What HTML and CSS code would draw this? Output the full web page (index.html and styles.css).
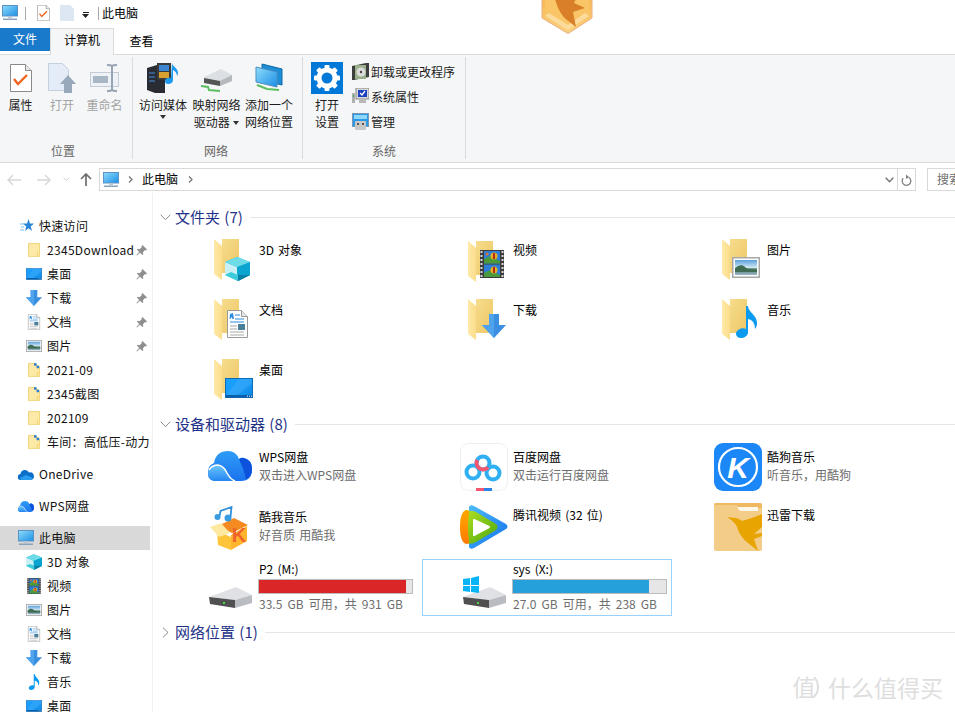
FILE: index.html
```html
<!DOCTYPE html>
<html lang="zh-CN">
<head>
<meta charset="utf-8">
<title>此电脑</title>
<link rel="stylesheet" href="styles.css">
</head>
<body>
<svg class="defs" aria-hidden="true">
  <defs>
    <linearGradient id="g-fback" x1="0" y1="0" x2="1" y2="1"><stop offset="0" stop-color="#f6dc8c"/><stop offset="1" stop-color="#eec766"/></linearGradient>
    <linearGradient id="g-fleaf" x1="0" y1="0" x2="1" y2="0"><stop offset="0" stop-color="#ffeaa8"/><stop offset="1" stop-color="#fbdc8a"/></linearGradient>
    <linearGradient id="g-screen" x1="0" y1="0" x2="1" y2="1"><stop offset="0" stop-color="#8fdcfa"/><stop offset="1" stop-color="#1b8fe6"/></linearGradient>
    <linearGradient id="g-desk" x1="0" y1="0" x2="1" y2="1"><stop offset="0" stop-color="#18a0ff"/><stop offset=".55" stop-color="#1b9cf8"/><stop offset="1" stop-color="#0d83e0"/></linearGradient>
    <linearGradient id="g-sea" x1="0" y1="0" x2="0" y2="1"><stop offset="0" stop-color="#5aa0dc"/><stop offset=".5" stop-color="#cfe7f2"/><stop offset=".6" stop-color="#4a7a5a"/><stop offset="1" stop-color="#9db8d2"/></linearGradient>
    <linearGradient id="g-cloud" x1="0" y1="0" x2="0" y2="1"><stop offset="0" stop-color="#2f9df6"/><stop offset="1" stop-color="#1b72ee"/></linearGradient>
    <linearGradient id="g-cloud2" x1="0" y1="0" x2="0" y2="1"><stop offset="0" stop-color="#6cc8fb"/><stop offset="1" stop-color="#2486f2"/></linearGradient>
    <linearGradient id="g-hex" x1="0" y1="0" x2="0" y2="1"><stop offset="0" stop-color="#f7b64e"/><stop offset="1" stop-color="#fbd27e"/></linearGradient>
    <linearGradient id="g-tv" x1="0" y1="0" x2="1" y2="1"><stop offset="0" stop-color="#4dbcf8"/><stop offset="1" stop-color="#1270ec"/></linearGradient>
    <linearGradient id="g-tvg" x1="0" y1="0" x2="1" y2="1"><stop offset="0" stop-color="#b4e020"/><stop offset="1" stop-color="#4aa80c"/></linearGradient>
    <linearGradient id="g-tvo" x1="0" y1="0" x2="0" y2="1"><stop offset="0" stop-color="#ffa800"/><stop offset="1" stop-color="#ff7a00"/></linearGradient>

    <symbol id="folder" viewBox="0 0 25 41"><path d="M8 0h17v34H8z" fill="url(#g-fback)"/><path d="M0 0l8 7v34l-8-6z" fill="url(#g-fleaf)"/><path d="M8 34h14v3H8z" fill="#fff" opacity=".5"/></symbol>
    <symbol id="fsm" viewBox="0 0 14 16"><path d="M.5.5h13v15H.5z" fill="#fdeaa6" stroke="#f0cf6a"/><path d="M11 10v5" stroke="#f0cf6a"/></symbol>
    <symbol id="fsmp" viewBox="0 0 14 16"><path d="M.5.5h8l5 4v11H.5z" fill="#fdeaa6" stroke="#f0cf6a"/><path d="M11 10v5" stroke="#f0cf6a"/><path d="M7 0h3v3H7zM10 3h3v3h-3z" fill="#2d7fd0"/></symbol>
    <symbol id="arrow" viewBox="0 0 24 24"><path d="M7 0h10v11h7L12 24 0 11h7z" fill="#3a8fe0"/><path d="M7 0h5v24L0 11h7z" fill="#4fa3ec"/></symbol>
    <symbol id="doc" viewBox="0 0 21 28"><path d="M.5.5h14l6 6v21H.5z" fill="#fff" stroke="#9a9a9a"/><path d="M14.500 .5v6h6" fill="#e6e6e6" stroke="#9a9a9a"/><path d="M3 4l3-1 1 6H5.500L5 7.500H4L3.500 9H2.500z" fill="#2b8ce0"/><path d="M8 5h5M8 9h9M3 12h14" stroke="#2b8ce0"/><path d="M3 16h7M3 19h7M3 22h14M3 25h14" stroke="#a8a8a8"/><rect x="11" y="14" width="7" height="6" fill="#4a7f98"/></symbol>
    <symbol id="pic" viewBox="0 0 28 21"><rect x=".75" y=".75" width="26.500" height="19.500" fill="#fff" stroke="#a8a8a8" stroke-width="1.500"/><rect x="3" y="3" width="22" height="15" fill="url(#g-sea)"/><path d="M3 11c4-3 7-4 10-1s6 2 12 3v2H3z" fill="#3f6c52"/></symbol>
    <symbol id="cube" viewBox="0 0 25 24"><path d="M12 0l13 5v13l-12 6L0 18V5z" fill="#17b6d8"/><path d="M0 5l12 5v14L0 18z" fill="#c9f0f5"/><path d="M12 10l13-5v13l-12 6z" fill="#09a4cf"/><path d="M0 5l12-5 13 5-13 5z" fill="#6edbe8"/><path d="M0 18l6-3 7 3v6z" fill="#3dcbdc"/><path d="M13 18l12 0-12 6z" fill="#0a7fa5"/></symbol>
    <symbol id="film" viewBox="0 0 24 28"><rect width="24" height="28" fill="#3c3c3c"/><path d="M1.500 1v26M22.500 1v26" stroke="#d8d8d8" stroke-width="2" stroke-dasharray="2 2"/><rect x="4" y="1" width="16" height="12.500" fill="#2c7ed8"/><rect x="4" y="14.500" width="16" height="12.500" fill="#2c7ed8"/><path d="M4 9l6-3 10 5v2.500H4zM4 23l6-3 10 5v2H4z" fill="#4a9a3c"/><circle cx="14" cy="6" r="3.500" fill="#e8b020"/><path d="M14 3v6" stroke="#b02a20" stroke-width="2"/><circle cx="14" cy="20" r="3.500" fill="#e8b020"/><path d="M14 17v6" stroke="#b02a20" stroke-width="2"/><circle cx="7" cy="4" r="1.500" fill="#e07030"/></symbol>
    <symbol id="note" viewBox="0 0 21 32"><path d="M10 0h2c0 6 9 9 9 17 0 3-1 5-2 6 0-5-2-9-7-10v13c0 4-4 6-7 6s-5-2-5-4c0-4 6-7 10-5z" fill="#0a9af0"/></symbol>
    <symbol id="desk" viewBox="0 0 28 20"><rect x=".5" y=".5" width="27" height="19" fill="url(#g-desk)" stroke="#0e6bb8"/><path d="M1 19l12-18h14v4L10 19z" fill="#fff" opacity=".08"/><rect x="1" y="17" width="26" height="2.500" fill="#0b5fa8"/><path d="M22 18.200h5" stroke="#fff" stroke-dasharray="1 1"/></symbol>
    <symbol id="pc" viewBox="0 0 16 16"><rect x=".5" y=".5" width="15" height="10.500" fill="url(#g-screen)" stroke="#5b94c4"/><rect x="6" y="11" width="4" height="2" fill="#b9c6d2"/><rect x="1" y="13.500" width="14" height="1.500" fill="#8aa2ba"/></symbol>
    <symbol id="pin" viewBox="0 0 12 12"><path d="M7 0l5 5-1 1-1-.5L7.500 8 8 10 7 11 4.500 8.500 1 11.500.5 11l3-3.500L1 5l1-1 2 .5L6.500 2 6 1z" fill="#8e8e8e"/></symbol>
    <symbol id="star" viewBox="0 0 14 14"><path d="M8.500 0l1.500 4.500h4L10.700 7.500 12 12 8.500 9.300 5 12l1.300-4.500L3 4.500h4z" fill="#2a86d8"/><path d="M0 5h4M1 8h3M0 11h4" stroke="#7dbdf0"/></symbol>
    <symbol id="check" viewBox="0 0 22 28"><path d="M.5.5h15l6 6v21H.5z" fill="#fff" stroke="#8a8a8a"/><path d="M15.500 .5v6h6" fill="#e8e8e8" stroke="#8a8a8a"/><path d="M4 15l4 5 9-9" fill="none" stroke="#f0641e" stroke-width="2.400"/></symbol>
    <symbol id="odrive" viewBox="0 0 16 11"><path d="M3 11a3 3 0 0 1-.5-6A4.500 4.500 0 0 1 11 3.500 3.700 3.700 0 0 1 13 11z" fill="#0a6fc8"/><path d="M2 9l6-3 7 3-2 2H3z" fill="#2a9cf0"/></symbol>
    <symbol id="wps" viewBox="0 0 44 30"><path d="M8 30Q0 30 0 22 0 14 6 12 8 0 20 0 28 0 31 8 34 6 36 7 44 9 44 18 44 30 33 30z" fill="url(#g-cloud)"/><path d="M31 8Q36 18 38 28 44 26 44 18 44 9 36 7 34 6 31 8z" fill="#0d52dc"/><path d="M0 22Q3 14 10 14 16 15 19 22 22 28 27 30H8Q0 30 0 22z" fill="url(#g-cloud2)"/><path d="M1 19Q4 14 10 14 16 15 19 22 22 28 27 30" fill="none" stroke="#fff" stroke-width="1.600"/></symbol>
    <symbol id="hdd" viewBox="0 0 43 23"><path d="M0 11L27 1l16 8-17 5z" fill="#dfe1e5"/><path d="M0 11l26 3v8L1 18z" fill="#505050"/><path d="M26 14l17-5v8l-17 5z" fill="#b9bcc0"/><rect x="14" y="16" width="2" height="2" fill="#45d845"/></symbol>
  </defs>
</svg>

<div class="window">
  <header class="titlebar">
    <svg class="t-pc" width="16" height="16"><use href="#pc"/></svg>
    <span class="t-sep"></span>
    <svg class="t-check" width="13" height="16"><use href="#check"/></svg>
    <svg class="t-blank" width="14" height="16" viewBox="0 0 14 16"><path d="M0 0h10l4 4v12H0z" fill="#dde6f3"/></svg>
    <svg class="t-caret" width="8" height="6" viewBox="0 0 8 6"><path d="M1 0h6v1H1zM0 2h7L3.500 6z" fill="#222"/></svg>
    <span class="t-sep t-sep2"></span>
    <span class="t-title">此电脑</span>
  </header>

  <nav class="tabs">
    <span class="tab tab-file">文件</span>
    <span class="tab tab-active">计算机</span>
    <span class="tab tab-view">查看</span>
  </nav>

  <section class="ribbon">
    <div class="group group-loc">
      <div class="buttons">
        <div class="rbtn rbtn-a"><svg width="22" height="28"><use href="#check"/></svg><span>属性</span></div>
        <div class="rbtn rbtn-b off"><svg width="28" height="30" viewBox="0 0 28 30"><path d="M.5.5h14l6 6v21H.5z" fill="#e4ecf7" stroke="#c4d0e0"/><path d="M20 12l8 9h-4v9h-8v-9h-4z" fill="#98a9bb"/></svg><span>打开</span></div>
        <div class="rbtn rbtn-c off"><svg width="30" height="30" viewBox="0 0 30 30"><rect x=".5" y="9.500" width="28" height="14" fill="#eef2f7" stroke="#c2ccd8"/><rect x="3" y="13" width="15" height="7" fill="#a8b6c6"/><path d="M17 2c3 0 5 0 5 2 0-2 2-2 5-2M22 4v22M17 28c3 0 5 0 5-2 0 2 2 2 5 2" fill="none" stroke="#96a4b4" stroke-width="2"/></svg><span>重命名</span></div>
      </div>
      <div class="glabel">位置</div>
    </div>
    <div class="group group-net">
      <div class="buttons">
        <div class="rbtn rbtn-d">
          <svg width="32" height="30" viewBox="0 0 32 30"><path d="M0 5l10-3 8 3v25H8l-8-3z" fill="#2a2c33"/><path d="M2 10h6M2 14h6M2 18h6" stroke="#3f8fe0"/><rect x="10" y="0" width="14" height="17" fill="#3a3a3a"/><rect x="12" y="2" width="10" height="6" fill="#3a84d0"/><rect x="12" y="9" width="10" height="6" fill="#d8a030"/><path d="M25 0c0 3 6 5 6 10 0 2-1 3-1 3 0-3-2-5-4-6v10c0 3-3 4-5 4s-3-1-3-3c0-3 4-4 6-3z" fill="#1d9af0"/></svg>
          <span>访问媒体</span><i class="caret"></i>
        </div>
        <div class="rbtn rbtn-e">
          <svg width="32" height="30" viewBox="0 0 32 30"><path d="M3 14L20 6l11 6v6l-12 5L3 20z" fill="#dcdfe3"/><path d="M3 15l16 3v5L3 20z" fill="#555"/><path d="M19 18l12-6v6l-12 5z" fill="#b5b8bc"/><path d="M0 23l7 1 1 3 11 1" fill="none" stroke="#5cc060" stroke-width="2"/></svg>
          <span>映射网络<br>驱动器 <b class="mini"></b></span>
        </div>
        <div class="rbtn rbtn-f">
          <svg width="30" height="30" viewBox="0 0 30 30"><path d="M8 1l20 5v16L8 17z" fill="#1d8ed6" stroke="#0f6aa8"/><path d="M2 4l21 5v15L2 19z" fill="url(#g-screen)" stroke="#4d8fc0"/><path d="M3 22l10 4 12 1" fill="none" stroke="#5cc060" stroke-width="2"/></svg>
          <span>添加一个<br>网络位置</span>
        </div>
      </div>
      <div class="glabel">网络</div>
    </div>
    <div class="group group-sys">
      <div class="buttons">
        <div class="rbtn rbtn-g">
          <svg width="32" height="32" viewBox="0 0 32 32"><rect width="32" height="32" fill="#0078d7"/><g fill="#fff"><circle cx="16" cy="16" r="10.500"/><rect x="13.500" y="3" width="5" height="26" rx="1"/><rect x="13.500" y="3" width="5" height="26" rx="1" transform="rotate(45 16 16)"/><rect x="13.500" y="3" width="5" height="26" rx="1" transform="rotate(90 16 16)"/><rect x="13.500" y="3" width="5" height="26" rx="1" transform="rotate(135 16 16)"/></g><circle cx="16" cy="16" r="5.500" fill="#0078d7"/></svg>
          <span>打开<br>设置</span>
        </div>
        <div class="smallcol">
          <div class="srow"><svg width="17" height="17" viewBox="0 0 17 17"><path d="M0 3l14-3h3v14L2 17H0z" fill="#3e3e3e"/><rect x="3" y="2" width="11" height="14" fill="#9ab08c"/><circle cx="9" cy="9" r="4.500" fill="#dcdcdc"/><circle cx="9" cy="9" r="1.200" fill="#444"/></svg><span>卸载或更改程序</span></div>
          <div class="srow"><svg width="17" height="17" viewBox="0 0 17 17"><rect x="4" y="0" width="13" height="11" fill="#d8d8d8" stroke="#888"/><rect x="6" y="2" width="9" height="7" fill="#1a3fc0"/><path d="M8 5l2 2 3-4" fill="none" stroke="#fff" stroke-width="1.300"/><rect x="0" y="5" width="3" height="10" fill="#b0b0b0"/><rect x="1" y="7" width="1" height="2" fill="#3fae44"/><rect x="7" y="12" width="7" height="3" fill="#b8b8b8"/></svg><span>系统属性</span></div>
          <div class="srow"><svg width="17" height="17" viewBox="0 0 17 17"><rect x=".5" y=".5" width="16" height="13" fill="#2a9ae8" stroke="#7a98b4"/><rect x="2" y="2" width="13" height="4" fill="#8fd8fa"/><rect x="3" y="8" width="11" height="9" rx="1" fill="#c8c8c8"/><circle cx="6" cy="11" r="1" fill="#333"/><circle cx="11" cy="11" r="1" fill="#333"/></svg><span>管理</span></div>
        </div>
      </div>
      <div class="glabel">系统</div>
    </div>
  </section>

  <div class="addressrow">
    <svg class="nav nav-back" width="14" height="12" viewBox="0 0 14 12"><path d="M6 1L1 6l5 5M1 6h13" fill="none" stroke="#d8d8d8" stroke-width="1.500"/></svg>
    <svg class="nav nav-fwd" width="14" height="12" viewBox="0 0 14 12"><path d="M8 1l5 5-5 5M13 6H0" fill="none" stroke="#d8d8d8" stroke-width="1.500"/></svg>
    <svg class="nav nav-down" width="7" height="5" viewBox="0 0 7 5"><path d="M.5 .5l3 3 3-3" fill="none" stroke="#d0d0d0"/></svg>
    <svg class="nav nav-up" width="12" height="13" viewBox="0 0 12 13"><path d="M1 6l5-5 5 5M6 1v12" fill="none" stroke="#6d6d6d" stroke-width="1.700"/></svg>
    <div class="addr">
      <svg width="16" height="16"><use href="#pc"/></svg>
      <svg class="crumb" width="5" height="7" viewBox="0 0 5 7"><path d="M1 .5l3 3-3 3" fill="none" stroke="#777" stroke-width="1.300"/></svg>
      <span class="addr-text">此电脑</span>
      <svg class="crumb" width="5" height="7" viewBox="0 0 5 7"><path d="M1 .5l3 3-3 3" fill="none" stroke="#777" stroke-width="1.300"/></svg>
      <svg class="addr-drop" width="9" height="6" viewBox="0 0 9 6"><path d="M.7 .7l3.800 4 3.800-4" fill="none" stroke="#777" stroke-width="1.500"/></svg>
      <div class="addr-refresh"><svg width="11" height="12" viewBox="0 0 11 12"><path d="M7.500 3.200A4.300 4.300 0 1 1 2.200 4.200" fill="none" stroke="#808080" stroke-width="1.300"/><path d="M5 .5l3 2.500-3 2z" fill="#808080"/></svg></div>
    </div>
    <div class="search">搜索</div>
  </div>

  <div class="body">
    <aside class="sidebar">
      <div class="sgroup">
        <div class="item lv0"><svg class="ic-star" width="14" height="14"><use href="#star"/></svg><span>快速访问</span></div>
        <div class="item"><svg class="ic-f" width="12" height="16"><use href="#fsm"/></svg><span>2345Download</span><svg class="pin" width="11" height="11"><use href="#pin"/></svg></div>
        <div class="item"><svg width="16" height="12"><use href="#desk"/></svg><span>桌面</span><svg class="pin" width="11" height="11"><use href="#pin"/></svg></div>
        <div class="item"><svg width="16" height="16"><use href="#arrow"/></svg><span>下载</span><svg class="pin" width="11" height="11"><use href="#pin"/></svg></div>
        <div class="item"><svg width="16" height="16"><use href="#doc"/></svg><span>文档</span><svg class="pin" width="11" height="11"><use href="#pin"/></svg></div>
        <div class="item"><svg width="16" height="12"><use href="#pic"/></svg><span>图片</span><svg class="pin" width="11" height="11"><use href="#pin"/></svg></div>
        <div class="item"><svg class="ic-f" width="12" height="16"><use href="#fsmp"/></svg><span>2021-09</span></div>
        <div class="item"><svg class="ic-f" width="12" height="16"><use href="#fsmp"/></svg><span>2345截图</span></div>
        <div class="item"><svg class="ic-f" width="12" height="16"><use href="#fsm"/></svg><span>202109</span></div>
        <div class="item"><svg class="ic-f" width="12" height="16"><use href="#fsmp"/></svg><span>车间：高低压-动力车间设备</span></div>
      </div>
      <div class="sgroup">
        <div class="item lv0"><svg width="16" height="11"><use href="#odrive"/></svg><span>OneDrive</span></div>
      </div>
      <div class="sgroup">
        <div class="item lv0"><svg width="16" height="11"><use href="#wps"/></svg><span>WPS网盘</span></div>
      </div>
      <div class="sgroup">
        <div class="item lv0 selected"><svg width="16" height="16"><use href="#pc"/></svg><span>此电脑</span></div>
        <div class="item"><svg width="16" height="16"><use href="#cube"/></svg><span>3D 对象</span></div>
        <div class="item"><svg width="16" height="16"><use href="#film"/></svg><span>视频</span></div>
        <div class="item"><svg width="16" height="12"><use href="#pic"/></svg><span>图片</span></div>
        <div class="item"><svg width="16" height="16"><use href="#doc"/></svg><span>文档</span></div>
        <div class="item"><svg width="16" height="16"><use href="#arrow"/></svg><span>下载</span></div>
        <div class="item"><svg width="16" height="16"><use href="#note"/></svg><span>音乐</span></div>
        <div class="item"><svg width="16" height="12"><use href="#desk"/></svg><span>桌面</span></div>
      </div>
    </aside>

    <main class="content">
      <div class="sechead">
        <svg width="11" height="7" viewBox="0 0 11 7"><path d="M.7 .7l4.800 5 4.800-5" fill="none" stroke="#8a8a8a"/></svg>
        <span>文件夹 (7)</span><i></i>
      </div>
      <div class="tiles tiles-folders">
        <div class="tile"><svg class="ticon" width="52" height="48" viewBox="-2 0 52 48"><use href="#folder" x="6" y="1" width="25" height="41"/><use href="#cube" x="17" y="19" width="25" height="24"/></svg><div class="ttext"><div class="name">3D 对象</div></div></div>
        <div class="tile"><svg class="ticon" width="52" height="48" viewBox="-2 0 52 48"><use href="#folder" x="6" y="3" width="25" height="41"/><use href="#film" x="18" y="12" width="24" height="28"/></svg><div class="ttext"><div class="name">视频</div></div></div>
        <div class="tile"><svg class="ticon" width="52" height="48" viewBox="-2 0 52 48"><use href="#folder" x="6" y="1" width="25" height="41"/><use href="#pic" x="16" y="19" width="28" height="21"/></svg><div class="ttext"><div class="name">图片</div></div></div>
        <div class="tile"><svg class="ticon" width="52" height="48" viewBox="-2 0 52 48"><use href="#folder" x="6" y="1" width="25" height="41"/><use href="#doc" x="19" y="12" width="21" height="28"/></svg><div class="ttext"><div class="name">文档</div></div></div>
        <div class="tile"><svg class="ticon" width="52" height="48" viewBox="-2 0 52 48"><use href="#folder" x="6" y="1" width="25" height="41"/><use href="#arrow" x="20" y="16" width="24" height="24"/></svg><div class="ttext"><div class="name">下载</div></div></div>
        <div class="tile"><svg class="ticon" width="52" height="48" viewBox="-2 0 52 48"><use href="#folder" x="6" y="1" width="25" height="41"/><use href="#note" x="20" y="8" width="21" height="32"/></svg><div class="ttext"><div class="name">音乐</div></div></div>
        <div class="tile"><svg class="ticon" width="52" height="48" viewBox="-2 0 52 48"><use href="#folder" x="6" y="1" width="25" height="41"/><use href="#desk" x="17" y="20" width="28" height="20"/></svg><div class="ttext"><div class="name">桌面</div></div></div>
      </div>

      <div class="sechead">
        <svg width="11" height="7" viewBox="0 0 11 7"><path d="M.7 .7l4.800 5 4.800-5" fill="none" stroke="#8a8a8a"/></svg>
        <span>设备和驱动器 (8)</span><i></i>
      </div>
      <div class="tiles tiles-devices">
        <div class="tile"><svg class="ticon" width="52" height="48" viewBox="-2 0 52 48"><use href="#wps" x="0" y="8" width="44" height="30"/></svg><div class="ttext two"><div class="name">WPS网盘</div><div class="desc">双击进入WPS网盘</div></div></div>
        <div class="tile"><svg class="ticon" width="52" height="48" viewBox="-2 0 52 48"><rect x="-1.500" y=".5" width="47" height="47" rx="8" fill="#fff" stroke="#efefef"/><circle cx="11" cy="29" r="6.500" fill="none" stroke="#2fb0f2" stroke-width="4"/><circle cx="31" cy="30" r="6.500" fill="none" stroke="#2fb0f2" stroke-width="4"/><circle cx="21" cy="20" r="6.500" fill="none" stroke="#2fb0f2" stroke-width="4"/><path d="M15.300 17A6.500 6.500 0 0 0 26 24.200" fill="none" stroke="#f4566f" stroke-width="4"/><path d="M14 45h8v3h-8z" fill="#f4566f"/><path d="M22 45h8v3h-8z" fill="#2b82e8"/></svg><div class="ttext two"><div class="name">百度网盘</div><div class="desc">双击运行百度网盘</div></div></div>
        <div class="tile"><svg class="ticon" width="52" height="48" viewBox="-2 0 52 48"><rect x="-2" width="48" height="48" rx="9" fill="#1c87f7"/><circle cx="22" cy="24" r="19" fill="none" stroke="#fff" stroke-width="2.200"/><text class="logo-k" x="22" y="35" text-anchor="middle">K</text></svg><div class="ttext two"><div class="name">酷狗音乐</div><div class="desc">听音乐，用酷狗</div></div></div>
        <div class="tile"><svg class="ticon" width="52" height="48" viewBox="-2 0 52 48"><path d="M10 23l16-8 14 7-16 8z" fill="#f58a20"/><path d="M9 28l14 6v13l-13-5z" fill="#ffc53a"/><path d="M23 32l16-9v15l-16 9z" fill="#ffb52e"/><path d="M2 24l11-4 9 10-11 4z" fill="#ffe9a0"/><text class="logo-kw" x="31" y="39" text-anchor="middle">K</text><path d="M11.500 13l1-5 11-4-1 10" fill="none" stroke="#2f8fd8" stroke-width="1.800"/><circle cx="9.500" cy="14" r="3" fill="#3a9ce0"/><circle cx="20" cy="15" r="3.500" fill="#3a9ce0"/></svg><div class="ttext two"><div class="name">酷我音乐</div><div class="desc">好音质 用酷我</div></div></div>
        <div class="tile"><svg class="ticon" width="52" height="48" viewBox="-2 0 52 48"><path d="M7 4Q8 1 12 3L44 21Q47 24 44 26L12 45Q8 47 7 44z" fill="url(#g-tv)"/><path d="M2 8Q10 7 14 9L34 21Q37 24 34 27L14 39Q10 42 3 40z" fill="url(#g-tvg)"/><path d="M4 7Q-2 9-2 24-2 39 4 41 8 41 7 38 5 24 7 10 8 7 4 7z" fill="url(#g-tvo)"/><path d="M12 17L27 24 12 32z" fill="#fff" stroke="#fff" stroke-width="2" stroke-linejoin="round"/></svg><div class="ttext"><div class="name">腾讯视频 (32 位)</div></div></div>
        <div class="tile"><svg class="ticon" width="52" height="48" viewBox="-2 0 52 48"><rect x="-2" width="48" height="48" rx="2" fill="#f3cd87"/><path d="M-2 2q0-2 2-2h44q2 0 2 2v3H24l-3-3z" fill="#efb962"/><path d="M21 4h21v4H24z" fill="#fff8ea"/><path d="M11 14L20 15Q24 16 26 18 34 16 46 11V24L38 31 46 30V33L38 36 42 48 32 40Q24 34 21 24 19 19 11 14z" fill="#e8a400"/></svg><div class="ttext"><div class="name">迅雷下载</div></div></div>
        <div class="tile drive"><svg class="ticon" width="52" height="48" viewBox="-2 0 52 48"><use href="#hdd" x="1" y="23" width="43" height="23"/></svg><div class="ttext"><div class="name">P2 (M:)</div><div class="bar"><div class="fill red" style="width:96%"></div></div><div class="desc">33.5 GB 可用，共 931 GB</div></div></div>
        <div class="tile drive focus"><svg class="ticon" width="52" height="48" viewBox="-2 0 52 48"><use href="#hdd" x="1" y="23" width="43" height="23"/><path d="M1 16l7-1v7H1zM9 15l8-2v9H9zM1 23h7v6l-7-1zM9 23h8v7l-8-1z" fill="#07b4f5"/></svg><div class="ttext"><div class="name">sys (X:)</div><div class="bar"><div class="fill blue" style="width:88.700%"></div></div><div class="desc">27.0 GB 可用，共 238 GB</div></div></div>
      </div>

      <div class="sechead">
        <svg width="11" height="11" viewBox="0 0 11 11"><path d="M3 .7l5 4.800-5 4.800" fill="none" stroke="#8a8a8a"/></svg>
        <span>网络位置 (1)</span><i></i>
      </div>
    </main>
  </div>

  <svg class="hexlogo" width="52" height="36" viewBox="-1 0 52 36"><path d="M0-5V18L25 33q1 .6 2 0L50 18V-5z" fill="url(#g-hex)" stroke="#e8b088"/><path d="M3-5V16L26 30 47 16V-5z" fill="#f9c566"/><path d="M3 16L26 30 47 16 43 13 26 25 7 13z" fill="#fcdc9c"/><path d="M13-1H34L32 3 43 8 31 12 34 27 25 20Q17 14 13-1z" fill="#d97f28"/></svg>

  <div class="watermark">
    <span class="wm-mark">值</span>
    <span class="wm-text">什么值得买</span>
  </div>
</div>
</body>
</html>
```

FILE: styles.css
```css
* { box-sizing: border-box; }
html, body { margin: 0; padding: 0; background: #fff; }
body {
  font-family: "Noto Sans CJK SC", "Noto Sans", sans-serif;
  font-size: 12px;
  color: #000;
}
svg { display: block; flex: none; }
.defs { position: absolute; width: 0; height: 0; overflow: hidden; }
.window { position: relative; width: 955px; height: 712px; overflow: hidden; display: flex; flex-direction: column; }

/* title bar */
.titlebar { height: 28px; flex: none; display: flex; align-items: center; padding-left: 2px; padding-bottom: 2px; }
.t-sep { width: 1px; height: 13px; background: #a8a8a8; margin-left: 7px; }
.t-check { margin-left: 11px; }
.t-blank { margin-left: 10px; }
.t-caret { margin-left: 8px; margin-top: 3px; }
.t-sep2 { margin-left: 8px; }
.t-title { margin-left: 3px; line-height: 16px; }

/* tabs */
.tabs { height: 26px; flex: none; display: flex; align-items: flex-start; }
.tab { display: block; text-align: center; }
.tab-file { width: 50px; height: 23px; line-height: 21px; background: #1979ca; color: #fff; }
.tab-active { position: relative; z-index: 1; width: 64px; height: 27px; line-height: 22px; background: #f5f6f7; border: 1px solid #dadbdc; border-bottom: 0; }
.tab-view { width: 55px; line-height: 25px; }

/* ribbon */
.ribbon { height: 109px; flex: none; display: flex; background: #f5f6f7; border-top: 1px solid #dadbdc; border-bottom: 1px solid #dadbdc; }
.group { height: 102px; margin-top: 2px; display: flex; flex-direction: column; border-right: 1px solid #dadbdc; }
.group-loc { width: 133px; padding-right: 6px; }
.group-net { width: 170px; padding-left: 3px; padding-right: 6px; }
.group-sys { width: 163px; padding-left: 4px; padding-right: 4px; }
.buttons { flex: 1; display: flex; }
.glabel { height: 16px; line-height: 16px; text-align: center; color: #666; }
.rbtn { display: flex; flex-direction: column; align-items: center; padding-top: 5px; line-height: 17px; text-align: center; white-space: nowrap; color: #1c1c1c; }
.rbtn svg { height: 32px; }
.rbtn span { display: block; margin-top: 2px; }
.rbtn.off { color: #a3a3a3; }
.rbtn-a { width: 41px; }
.rbtn-b { width: 42px; }
.rbtn-c { width: 43px; }
.rbtn-d { width: 54px; flex: none; }
.rbtn-e { width: 53px; flex: none; }
.rbtn-f { width: 52px; flex: none; }
.rbtn-g { width: 40px; flex: none; }
.caret { display: block; width: 0; height: 0; margin-top: 2px; border: 3px solid transparent; border-top: 4px solid #333; border-bottom: 0; }
.mini { display: inline-block; width: 0; height: 0; margin: 0 0 2px 1px; vertical-align: middle; border: 3px solid transparent; border-top: 4px solid #333; border-bottom: 0; }
.smallcol { margin-left: 5px; padding-top: 2px; flex: none; }
.srow { height: 25px; display: flex; align-items: center; gap: 2px; color: #1c1c1c; white-space: nowrap; }

/* address row */
.addressrow { height: 30px; flex: none; display: flex; align-items: center; padding-left: 7px; padding-top: 3px; }
.nav-fwd { margin-left: 16px; }
.nav-down { margin-left: 12px; }
.nav-up { margin-left: 10px; }
.addr { margin-left: 7px; width: 817px; flex: none; height: 23px; display: flex; align-items: center; padding-left: 3px; border: 1px solid #d9d9d9; }
.crumb { margin-left: 9px; }
.addr-text { margin-left: 9px; line-height: 16px; padding-bottom: 2px; }
.crumb + .addr-text + .crumb { margin-left: 10px; }
.addr-drop { margin-left: auto; margin-right: 3px; }
.addr-refresh { width: 18px; height: 21px; display: flex; align-items: center; justify-content: center; border-left: 1px solid #d9d9d9; }
.search { margin-left: 11px; width: 60px; flex: none; height: 23px; line-height: 20px; padding-left: 9px; border: 1px solid #d9d9d9; color: #6d6d6d; }

/* body */
.body { flex: 1; min-height: 0; display: flex; }
.sidebar { width: 153px; flex: none; padding-top: 21px; border-right: 1px solid #f0f0f0; overflow: hidden; }
.sgroup { margin-bottom: 8px; }
.item { width: 150px; height: 24px; display: flex; align-items: center; padding-left: 26px; overflow: hidden; white-space: nowrap; color: #111; }
.item > span { margin-left: 5px; padding-bottom: 2px; letter-spacing: .3px; flex: 1 1 auto; min-width: 0; overflow: hidden; }
.item .ic-f { margin-left: 2px; margin-right: 2px; }
.item .ic-star { margin-left: 2px; }
.item .pin { margin: 0 3px 0 0; }
.item.lv0 { padding-left: 18px; }
.item.selected { background: #d9d9d9; }

/* content */
.content { flex: 1; min-width: 0; padding-top: 12px; }
.sechead { height: 24px; display: flex; align-items: center; padding-left: 7px; color: #1e3287; font-size: 15px; word-spacing: 1px; white-space: nowrap; }
.sechead span { margin-left: 4px; line-height: 20px; padding-bottom: 1px; }
.sechead i { flex: 1; height: 1px; margin-left: 7px; background: #e5e5e5; }
.tiles { display: grid; grid-template-columns: repeat(3, 250px); column-gap: 4px; row-gap: 3px; margin-left: 15px; }
.tiles-folders { margin-top: 5px; margin-bottom: 1px; }
.tiles-devices { margin-top: 3px; margin-bottom: 4px; }
.tile { height: 57px; display: flex; align-items: flex-start; padding: 3px 0 0 37px; border: 1px solid transparent; }
.tile.focus { border-color: #99d1ff; }
.ttext { margin-left: 1px; padding-top: 3px; line-height: 18px; word-spacing: 1.500px; white-space: nowrap; }
.ttext.two { padding-top: 5px; }
.desc { color: #6d6d6d; }
.drive .ttext { padding-top: 0; width: 155px; margin-top: -3px; margin-left: 0; }
.drive .name, .drive .desc { padding-left: 1px; }
.drive .desc { margin-top: 1px; word-spacing: 2.400px; }
.bar { height: 15px; margin-top: 1px; border: 1px solid #bcbcbc; background: #e6e6e6; }
.fill { height: 100%; }
.fill.red { background: #da2626; }
.fill.blue { background: #26a0da; }
.logo-k { font: italic 700 30px "Liberation Sans", sans-serif; fill: #fff; }
.logo-kw { font: 700 20px "Liberation Sans", sans-serif; fill: #f0642a; }

/* overlays */
.hexlogo { position: absolute; left: 541px; top: 0; }
.watermark { position: absolute; left: 789px; top: 672px; display: flex; align-items: center; gap: 9px; color: #dedede; }
.wm-mark { width: 30px; height: 30px; border: 2px solid transparent; border-right-color: #dedede; border-radius: 50%; text-align: center; font-size: 23px; line-height: 24px; }
.wm-text { font-size: 23px; line-height: 30px; }
```
